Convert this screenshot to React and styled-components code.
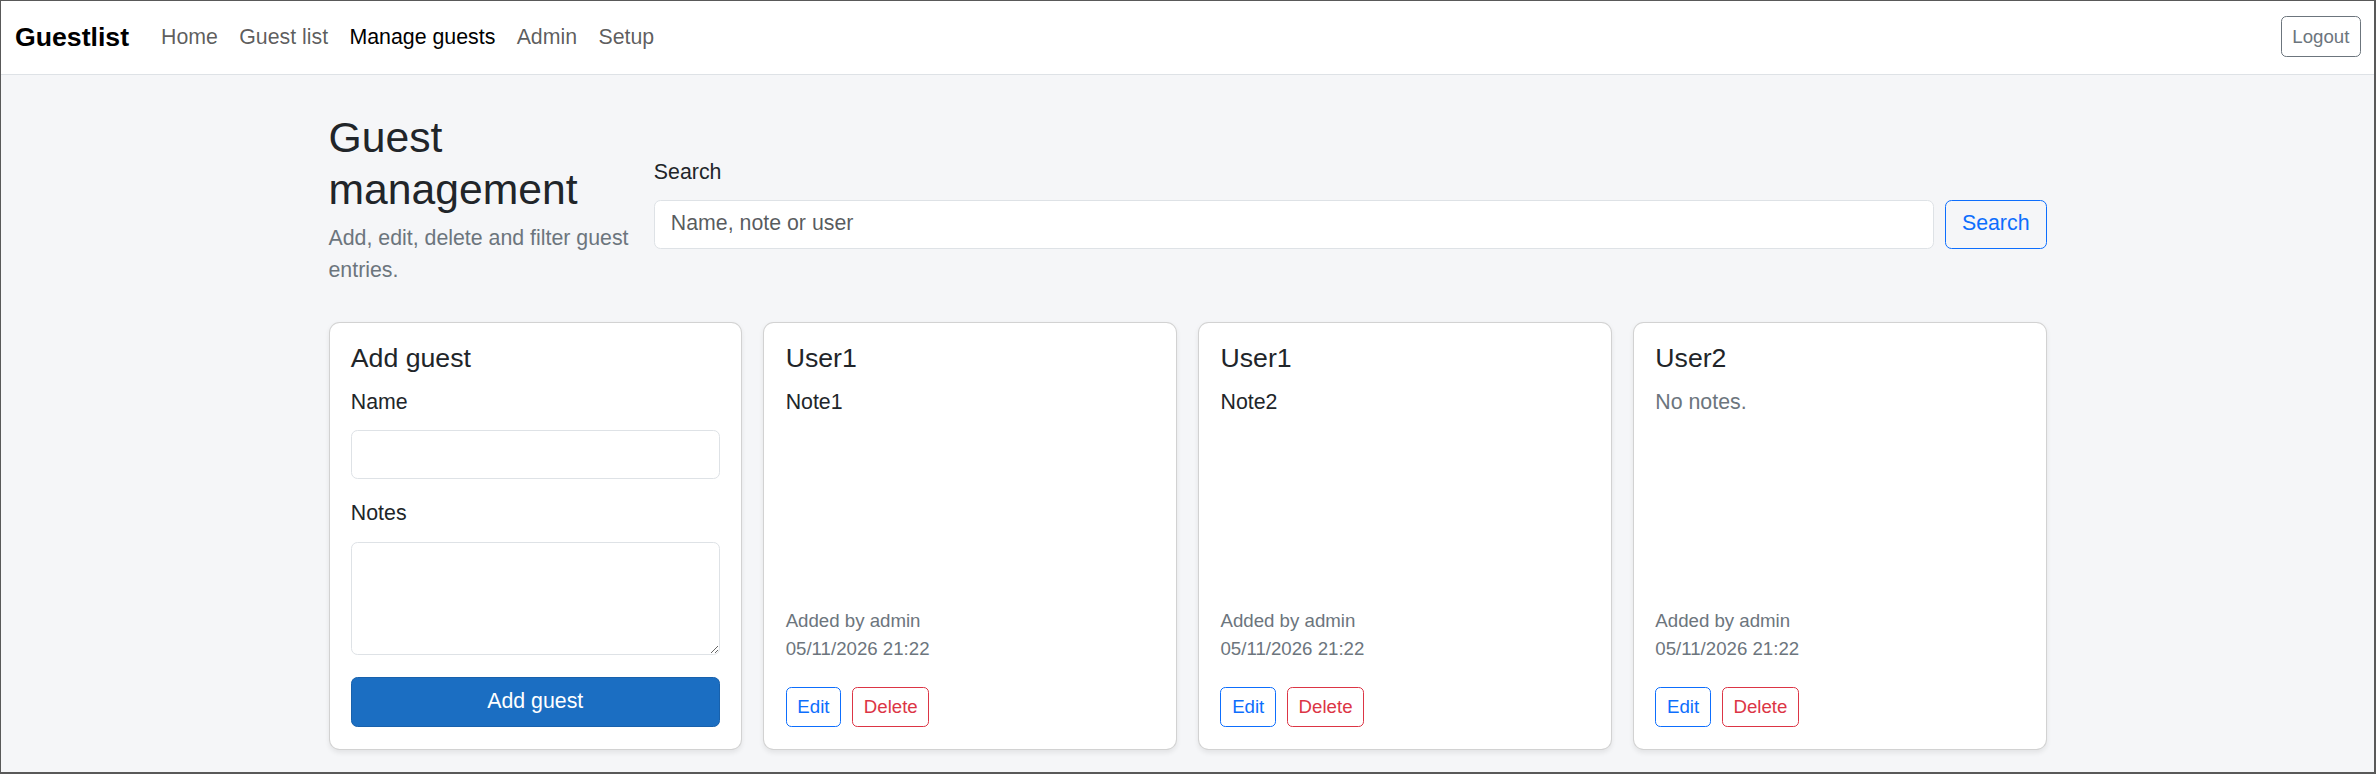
import styled, { createGlobalStyle } from "styled-components";

const GlobalStyle = createGlobalStyle`
  html, body {
    margin: 0;
    padding: 0;
  }
  body {
    font-family: "Liberation Sans", Arial, Helvetica, sans-serif;
    font-size: 21.33px;
    line-height: 1.5;
    color: #212529;
    background: #f5f6f8;
  }
  * {
    box-sizing: border-box;
  }
`

const Frame = styled.div`
  height: 100vh;
  border-style: solid;
  border-color: #595959;
  border-width: 1px 2px 2px 1px;
  background: #f5f6f8;
  overflow: hidden;
`

const Navbar = styled.nav`
  display: flex;
  align-items: center;
  padding: 9px 13px 11px 14px;
  background: #fff;
  border-bottom: 1px solid #dee2e6;
`

const Brand = styled.a`
  font-size: 26.67px;
  font-weight: 700;
  color: #000;
  margin-right: 21.33px;
  line-height: 1.5;
  text-decoration: none;
`

const NavList = styled.div`
  display: flex;
  flex: 1;
`

const NavLink = styled.a`
  padding: 10.67px;
  color: ${(props) => (props.$active ? "#000" : "rgba(0, 0, 0, 0.65)")};
  text-decoration: none;
  line-height: 32px;
`

const SmallButton = styled.button`
  font-family: inherit;
  font-size: 18.67px;
  line-height: 1.5;
  padding: 5.33px 10.67px;
  border-radius: 5.33px;
  background: transparent;
  border: 1px solid ${(props) => props.$color};
  color: ${(props) => props.$color};
  cursor: pointer;
`

const Main = styled.main`
  width: 1718px;
  margin: 0 auto;
  padding-top: 37px;
`

const HeaderRow = styled.div`
  display: flex;
  gap: 21.33px;
  align-items: flex-start;
  margin-bottom: 35px;
`

const TitleBlock = styled.div`
  width: 304px;
  flex-shrink: 0;
`

const PageTitle = styled.h2`
  margin: 0 0 8.67px;
  font-size: 42.67px;
  font-weight: 500;
  line-height: 1.2;
`

const Muted = styled.p`
  margin: 0;
  color: #6c757d;
`

const SearchForm = styled.form`
  flex: 1;
  padding-top: 45px;
`

const Label = styled.label`
  display: block;
  margin-bottom: ${(props) => props.$mb || "10.67px"};
`

const SearchRow = styled.div`
  display: flex;
  gap: 10.67px;
`

const TextInput = styled.input`
  display: block;
  width: 100%;
  font-family: inherit;
  font-size: 21.33px;
  line-height: 1.5;
  padding: 7.3px 16px;
  color: #212529;
  background: #fff;
  border: 1px solid #dee2e6;
  border-radius: 6.5px;

  &::placeholder {
    color: rgba(33, 37, 41, 0.75);
  }
`

const TextArea = styled.textarea`
  display: block;
  width: 100%;
  font-family: inherit;
  font-size: 21.33px;
  line-height: 1.5;
  padding: 7.5px 16px;
  border: 1px solid #dee2e6;
  border-radius: 6.5px;
  background: #fff;
  resize: vertical;
`

const OutlineButton = styled.button`
  flex-shrink: 0;
  font-family: inherit;
  font-size: 21.33px;
  line-height: 1.5;
  padding: 7.3px 16px;
  border-radius: 6.5px;
  background: transparent;
  border: 1px solid #0d6efd;
  color: #0d6efd;
`

const CardGrid = styled.div`
  display: grid;
  grid-template-columns: repeat(4, 1fr);
  gap: 21.33px;
`

const Card = styled.div`
  display: flex;
  flex-direction: column;
  background: #fff;
  border: 1px solid rgba(0, 0, 0, 0.175);
  border-radius: 10.67px;
  box-shadow: 0 2.67px 5.33px rgba(0, 0, 0, 0.075);
  padding: 18.7px 21.33px 21.33px;
`

const CardTitle = styled.h5`
  margin: 0 0 12.67px;
  font-size: 26.67px;
  font-weight: 500;
  line-height: 1.2;
`

const NoteText = styled.p`
  margin: 0;
  color: ${(props) => (props.$empty ? "#6c757d" : "#212529")};
`

const Field = styled.div`
  margin-bottom: ${(props) => props.$mb || "21.33px"};
`

const PrimaryButton = styled.button`
  width: 100%;
  font-family: inherit;
  font-size: 21.33px;
  line-height: 1.5;
  padding: 8.1px 16px;
  border-radius: 6.5px;
  color: #fff;
  background: #1b6ec2;
  border: 1px solid #1861ac;
`

const CardFooter = styled.div`
  margin-top: auto;
`

const Meta = styled.div`
  font-size: 18.67px;
  line-height: 1.5;
  color: #6c757d;
  margin-bottom: 24px;
`

const Actions = styled.div`
  display: flex;
  gap: 11px;
`

const guests = [
  { name: "User1", note: "Note1" },
  { name: "User1", note: "Note2" },
  { name: "User2", note: "" },
]

const App = () => {
  return (
    <>
      <GlobalStyle />
      <Frame>
        <Navbar>
          <Brand href="#">Guestlist</Brand>
          <NavList>
            <NavLink href="#">Home</NavLink>
            <NavLink href="#">Guest list</NavLink>
            <NavLink href="#" $active>Manage guests</NavLink>
            <NavLink href="#">Admin</NavLink>
            <NavLink href="#">Setup</NavLink>
          </NavList>
          <SmallButton $color="#6c757d">Logout</SmallButton>
        </Navbar>

        <Main>
          <HeaderRow>
            <TitleBlock>
              <PageTitle>Guest management</PageTitle>
              <Muted>Add, edit, delete and filter guest entries.</Muted>
            </TitleBlock>
            <SearchForm onSubmit={(e) => e.preventDefault()}>
              <Label>Search</Label>
              <SearchRow>
                <TextInput type="text" placeholder="Name, note or user" />
                <OutlineButton type="submit">Search</OutlineButton>
              </SearchRow>
            </SearchForm>
          </HeaderRow>

          <CardGrid>
            <Card>
              <CardTitle>Add guest</CardTitle>
              <Field $mb="19.7px">
                <Label $mb="11.5px">Name</Label>
                <TextInput type="text" />
              </Field>
              <Field $mb="21.7px">
                <Label $mb="12px">Notes</Label>
                <TextArea rows={3} />
              </Field>
              <PrimaryButton>Add guest</PrimaryButton>
            </Card>

            {guests.map((guest, i) => (
              <Card key={i}>
                <CardTitle>{guest.name}</CardTitle>
                <NoteText $empty={!guest.note}>
                  {guest.note || "No notes."}
                </NoteText>
                <CardFooter>
                  <Meta>
                    Added by admin
                    <br />
                    05/11/2026 21:22
                  </Meta>
                  <Actions>
                    <SmallButton $color="#0d6efd">Edit</SmallButton>
                    <SmallButton $color="#dc3545">Delete</SmallButton>
                  </Actions>
                </CardFooter>
              </Card>
            ))}
          </CardGrid>
        </Main>
      </Frame>
    </>
  )
}

export default App
